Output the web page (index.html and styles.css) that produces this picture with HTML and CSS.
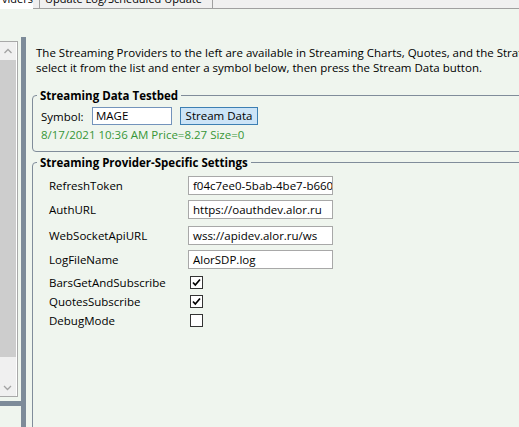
FILE: index.html
```html
<!DOCTYPE html>
<html>
<head>
<meta charset="utf-8">
<link rel="stylesheet" href="styles.css">
</head>
<body>
<div class="tabs">
  <div class="tab tab-active"><span>viders</span></div>
  <div class="tab-gap"></div>
  <div class="tab tab-inactive"><span>Update Log/Scheduled Update</span></div>
  <div class="tab-fill"></div>
</div>
<div class="page">
  <div class="left">
    <div class="listbox">
      <div class="sb-btn">
        <svg width="16" height="17" viewBox="0 0 16 17"><polyline points="4.5,11 8,7.5 11.5,11" fill="none" stroke="#a3a3a3" stroke-width="1.3"/></svg>
      </div>
      <div class="sb-thumb"></div>
      <div class="sb-track"></div>
      <div class="sb-btn">
        <svg width="16" height="17" viewBox="0 0 16 17"><polyline points="4,7 7.5,10.5 11,7" fill="none" stroke="#a3a3a3" stroke-width="1.3"/></svg>
      </div>
    </div>
    <div class="hbar"></div>
  </div>
  <div class="splitter"></div>
  <div class="content">
    <p class="intro">The Streaming Providers to the left are available in Streaming Charts, Quotes, and the Strategy Tester. To test a provider,<br>select it from the list and enter a symbol below, then press the Stream Data button.</p>
    <fieldset class="group g1">
      <legend>Streaming Data Testbed</legend>
      <div class="sym-row">
        <span class="sym-label">Symbol:</span>
        <div class="sym-box">MAGE</div>
        <div class="btn">Stream Data</div>
      </div>
      <div class="status">8/17/2021 10:36 AM Price=8.27 Size=0</div>
    </fieldset>
    <fieldset class="group g2">
      <legend>Streaming Provider-Specific Settings</legend>
      <div class="row">
        <span class="lbl">RefreshToken</span>
        <div class="tb">f04c7ee0-5bab-4be7-b660-3f1a2c9d8e77</div>
      </div>
      <div class="row row-wide">
        <span class="lbl">AuthURL</span>
        <div class="tb">https://oauthdev.alor.ru</div>
      </div>
      <div class="row">
        <span class="lbl">WebSocketApiURL</span>
        <div class="tb">wss://apidev.alor.ru/ws</div>
      </div>
      <div class="row row-last">
        <span class="lbl">LogFileName</span>
        <div class="tb">AlorSDP.log</div>
      </div>
      <div class="row row-cb">
        <span class="lbl">BarsGetAndSubscribe</span>
        <div class="cb"><svg width="11" height="11" viewBox="0 0 11 11"><polyline points="2,5.5 4.3,8 9,2.5" fill="none" stroke="#000" stroke-width="1.7"/></svg></div>
      </div>
      <div class="row row-cb">
        <span class="lbl">QuotesSubscribe</span>
        <div class="cb"><svg width="11" height="11" viewBox="0 0 11 11"><polyline points="2,5.5 4.3,8 9,2.5" fill="none" stroke="#000" stroke-width="1.7"/></svg></div>
      </div>
      <div class="row row-cb">
        <span class="lbl">DebugMode</span>
        <div class="cb"></div>
      </div>
    </fieldset>
  </div>
</div>
</body>
</html>
```
FILE: styles.css
```css
html, body {
  margin: 0;
  padding: 0;
}
body {
  width: 519px;
  height: 427px;
  overflow: hidden;
  background: #eff5ee;
  font-family: "Open Sans", "Noto Sans", sans-serif;
  font-size: 11.5px;
  color: #000;
}
.tabs {
  display: flex;
  height: 9px;
  background: #f0f0f0;
}
.tab {
  box-sizing: border-box;
  height: 9px;
  overflow: hidden;
  font-size: 11px;
  line-height: 12px;
  white-space: nowrap;
}
.tab span {
  display: block;
  margin-top: -7px;
}
.tab-active {
  width: 33px;
  background: #fff;
  text-align: right;
}
.tab-gap {
  width: 6px;
  border-bottom: 1px solid #a0a0a0;
}
.tab-inactive {
  width: 174px;
  border: 1px solid #a0a0a0;
  border-top: 0;
  padding-left: 5px;
  background: #f0f0f0;
}
.tab-fill {
  flex: 1;
  border-bottom: 1px solid #a0a0a0;
}
.page {
  display: flex;
  height: 418px;
  box-sizing: border-box;
  padding-top: 28px;
}
.left {
  width: 21px;
  display: flex;
  flex-direction: column;
  padding-top: 4px;
}
.listbox {
  width: 18px;
  height: 356px;
  box-sizing: border-box;
  border: 1px solid #a9a9a9;
  border-left: 0;
  background: #f0f0f0;
  display: flex;
  flex-direction: column;
  box-shadow: inset -1px 0 0 #fff;
}
.sb-btn {
  height: 17px;
  width: 16px;
}
.sb-btn svg {
  display: block;
}
.sb-thumb {
  margin-top: 1px;
  height: 297px;
  width: 16px;
  background: #cdcdcd;
}
.sb-track {
  flex: 1;
}
.hbar {
  margin-top: 4px;
  height: 5px;
  width: 21px;
  background: #7d8b99;
}
.splitter {
  width: 5px;
  background: #7d8b99;
}
.content {
  flex: 1;
  min-width: 0;
  padding: 8px 0 0 6px;
}
.intro {
  margin: 0 0 0 4px;
  line-height: 15px;
  white-space: nowrap;
}
.group {
  margin: 0;
  padding: 0;
  border: 1px solid #808c9a;
  border-radius: 4px;
  width: 600px;
  min-inline-size: 0;
}
.group legend {
  padding: 0 3px;
  font-weight: bold;
  line-height: 15px;
}
.g1 {
  margin-top: 13px;
  padding: 4px 0 9px 8px;
}
.g1 legend {
  margin-left: -4px;
}
.sym-row {
  display: flex;
  align-items: center;
  height: 18px;
}
.sym-label {
  width: 51px;
}
.sym-box {
  box-sizing: border-box;
  width: 80px;
  height: 18px;
  border: 1px solid #7393bb;
  background: #fff;
  padding-left: 3px;
  line-height: 16px;
}
.btn {
  box-sizing: border-box;
  margin-left: 8px;
  width: 78px;
  height: 18px;
  border: 1px solid #3d7fb3;
  background: #cce4f7;
  text-align: center;
  line-height: 16px;
}
.status {
  margin-top: 2px;
  line-height: 15px;
  color: #379537;
}
.g2 {
  margin-top: 3px;
  height: 400px;
  padding: 6px 0 0 16px;
}
.g2 legend {
  margin-left: -12px;
}
.row {
  display: flex;
  align-items: center;
  height: 19px;
  margin-bottom: 5px;
}
.row-wide {
  margin-bottom: 7px;
}
.row-last {
  margin-bottom: 4px;
}
.row-cb {
  margin-bottom: 0;
}
.lbl {
  width: 139px;
}
.tb {
  box-sizing: border-box;
  width: 145px;
  height: 19px;
  border: 1px solid #a8a8a8;
  background: #fff;
  padding-left: 4px;
  line-height: 17px;
  overflow: hidden;
  white-space: nowrap;
}
.cb {
  box-sizing: border-box;
  width: 13px;
  height: 13px;
  margin-left: 2px;
  border: 1px solid #333;
  background: #fff;
}
.cb svg {
  display: block;
}
```
